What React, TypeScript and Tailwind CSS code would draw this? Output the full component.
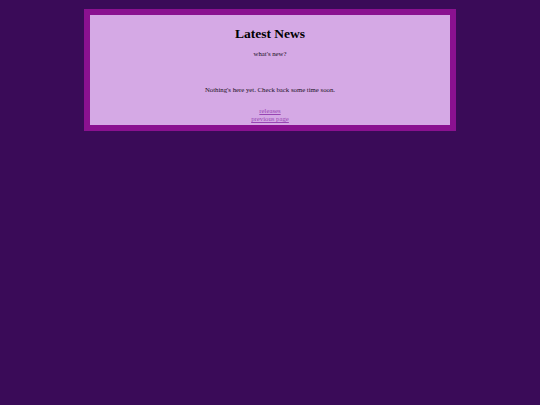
export default function App() {
  return (
    <div
      className="min-h-[405px] w-full bg-[#3a0b58] pt-[9px]"
      style={{ fontFamily: '"Liberation Serif", "Times New Roman", serif' }}
    >
      {/* news box */}
      <div className="mx-auto w-[372px] bg-[#8a1190] p-[6px]">
        <div className="bg-[#d5a9e5] pt-[11px] pb-[2px] text-center text-[6.75px] leading-[8px] text-[#1a1024]">
          <h1 className="text-[13.5px] leading-[16px] font-bold text-black">Latest News</h1>
          <p className="mt-[8px]">what's new?</p>

          <p className="mt-[28px]">Nothing's here yet. Check back some time soon.</p>

          <div className="mt-[13px] flex flex-col items-center">
            <a href="#" className="text-[#9845b3] underline">
              releases
            </a>
            <a href="#" className="text-[#9845b3] underline">
              previous page
            </a>
          </div>
        </div>
      </div>
    </div>
  );
}
